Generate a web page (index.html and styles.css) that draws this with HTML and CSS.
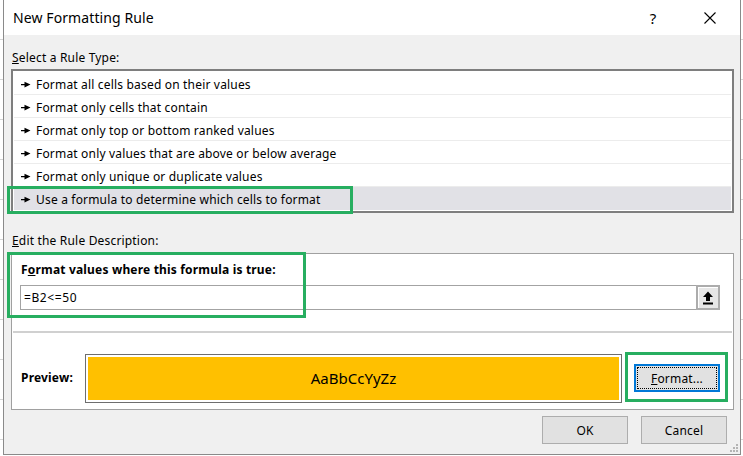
FILE: index.html
```html
<!DOCTYPE html>
<html lang="en">
<head>
<meta charset="utf-8">
<title>New Formatting Rule</title>
<link rel="stylesheet" href="styles.css">
</head>
<body>
<div class="screen">
  <div class="dialog">
    <div class="titlebar">
      <span class="title">New Formatting Rule</span>
      <span class="help">?</span>
      <span class="close"><svg width="12" height="12" viewBox="0 0 12 12"><path d="M0.5 0.5 L11.5 11.5 M11.5 0.5 L0.5 11.5" stroke="#000" stroke-width="1.1" fill="none"/></svg></span>
    </div>
    <div class="body">
      <div class="label label-select"><u>S</u>elect a Rule Type:</div>
      <ul class="rules">
        <li class="rule"><svg class="arrow" width="10" height="7" viewBox="0 0 10 7"><path d="M0 3h4v1.2H0z M3.5 0.8 L9.5 3.6 L3.5 6.4z" fill="#000"/></svg>Format all cells based on their values</li>
        <li class="rule"><svg class="arrow" width="10" height="7" viewBox="0 0 10 7"><path d="M0 3h4v1.2H0z M3.5 0.8 L9.5 3.6 L3.5 6.4z" fill="#000"/></svg>Format only cells that contain</li>
        <li class="rule"><svg class="arrow" width="10" height="7" viewBox="0 0 10 7"><path d="M0 3h4v1.2H0z M3.5 0.8 L9.5 3.6 L3.5 6.4z" fill="#000"/></svg>Format only top or bottom ranked values</li>
        <li class="rule"><svg class="arrow" width="10" height="7" viewBox="0 0 10 7"><path d="M0 3h4v1.2H0z M3.5 0.8 L9.5 3.6 L3.5 6.4z" fill="#000"/></svg>Format only values that are above or below average</li>
        <li class="rule"><svg class="arrow" width="10" height="7" viewBox="0 0 10 7"><path d="M0 3h4v1.2H0z M3.5 0.8 L9.5 3.6 L3.5 6.4z" fill="#000"/></svg>Format only unique or duplicate values</li>
        <li class="rule rule-selected"><svg class="arrow" width="10" height="7" viewBox="0 0 10 7"><path d="M0 3h4v1.2H0z M3.5 0.8 L9.5 3.6 L3.5 6.4z" fill="#000"/></svg>Use a formula to determine which cells to format</li>
      </ul>
      <div class="label label-edit"><u>E</u>dit the Rule Description:</div>
      <div class="desc">
        <div class="desc-top">
          <div class="bold-label">F<u>o</u>rmat values where this formula is true:</div>
          <div class="formula">
            <span class="formula-text">=B2&lt;=50</span>
            <span class="collapse"><svg width="12" height="14" viewBox="0 0 12 14"><path d="M6 0.5 L11 6 L8 6 L8 10 L4 10 L4 6 L1 6z" fill="#000"/><rect x="1" y="11.5" width="10" height="2" fill="#000"/></svg></span>
          </div>
        </div>
        <div class="sep"></div>
        <div class="preview-row">
          <div class="bold-label preview-label">Preview:</div>
          <div class="preview"><div class="preview-fill">AaBbCcYyZz</div></div>
          <div class="btn btn-format"><div class="focus"><u>F</u>ormat...</div></div>
        </div>
      </div>
      <div class="actions">
        <div class="btn">OK</div>
        <div class="btn">Cancel</div>
      </div>
    </div>
    <div class="hl hl-rule"></div>
    <div class="hl hl-formula"></div>
    <div class="hl hl-format"></div>
    <svg class="grip" width="9" height="9" viewBox="0 0 9 9"><g fill="#b4b4b4"><rect x="6" y="0" width="2" height="2"/><rect x="3" y="3" width="2" height="2"/><rect x="6" y="3" width="2" height="2"/><rect x="0" y="6" width="2" height="2"/><rect x="3" y="6" width="2" height="2"/><rect x="6" y="6" width="2" height="2"/></g></svg>
  </div>
</div>
</body>
</html>
```

FILE: styles.css
```css
* { box-sizing: border-box; }
html, body { margin: 0; padding: 0; }
body {
  width: 743px;
  height: 456px;
  overflow: hidden;
  font-family: "Noto Sans", "DejaVu Sans", sans-serif;
  font-size: 12px;
  letter-spacing: 0.18px;
  color: #000;
  background-color: #fff;
  background-image: repeating-linear-gradient(to bottom, transparent 0, transparent 39px, #d6d6d6 39px, #d6d6d6 40px);
}
.screen {
  display: flex;
  padding-left: 3px;
}
.dialog {
  position: relative;
  width: 738px;
  height: 455px;
  border: 1px solid #8a8a8a;
  border-top: none;
  background: #f0f0f0;
  display: flex;
  flex-direction: column;
}
.titlebar {
  height: 35px;
  background: #fff;
  display: flex;
  align-items: center;
  padding-left: 9px;
}
.title {
  font-size: 14px;
  letter-spacing: 0.1px;
  flex: 1;
  line-height: 35px;
}
.help {
  font-size: 15px;
  width: 14px;
  margin-right: 44px;
  text-align: center;
}
.close {
  display: flex;
  width: 12px;
  margin-right: 24px;
}
.body {
  flex: 1;
  display: flex;
  flex-direction: column;
  padding: 0 6px 0 7px;
}
.label {
  line-height: 16px;
  padding-left: 1px;
}
.label-select { margin-top: 15px; margin-bottom: 3px; }
.label-edit { margin-top: 20px; margin-bottom: 4px; }
.rules {
  list-style: none;
  margin: 0;
  padding: 1px;
  border: 2px solid #7e7e7e;
  background: #fff;
  width: 723px;
}
.rule {
  height: 23px;
  display: flex;
  align-items: center;
  padding-left: 7px;
  padding-top: 3px;
  border-bottom: 1px solid #ececec;
}
.rule:last-child { border-bottom: none; padding-top: 2px; }
.rule-selected { background: #e1e1e6; }
.arrow { margin-right: 5px; flex: none; }
.desc {
  width: 723px;
  height: 157px;
  border: 1px solid #a0a0a0;
  background: #fff;
  display: flex;
  flex-direction: column;
}
.desc-top {
  padding: 8px 13px 0 8px;
  height: 77px;
}
.bold-label {
  font-weight: bold;
  line-height: 16px;
  padding-left: 1px;
}
.formula {
  margin-top: 7px;
  height: 25px;
  border: 1px solid #a3a3a3;
  display: flex;
  align-items: center;
}
.formula-text {
  flex: 1;
  padding-left: 3px;
  letter-spacing: 0.6px;
}
.collapse {
  width: 24px;
  height: 25px;
  margin: -1px -1px -1px 0;
  border: 2px solid #acacac;
  background: #e6e6e6;
  box-shadow: inset 1px 1px 0 #fff;
  display: flex;
  align-items: center;
  justify-content: center;
}
.sep {
  height: 2px;
  margin: 0 1px;
  background: #d0d0d0;
}
.preview-row {
  flex: 1;
  display: flex;
  align-items: center;
  padding: 20px 13px 6px 8px;
}
.preview-label { width: 65px; }
.preview {
  width: 537px;
  height: 49px;
  border: 1px solid #6e6e6e;
  padding: 2px;
  background: #fff;
}
.preview-fill {
  height: 100%;
  background: #ffc000;
  display: flex;
  align-items: center;
  justify-content: center;
  font-size: 15px;
  letter-spacing: 0;
}
.btn {
  width: 86px;
  height: 28px;
  border: 1px solid #adadad;
  background: #e1e1e1;
  display: flex;
  align-items: center;
  justify-content: center;
}
.btn-format {
  margin-left: 12px;
  border: 2px solid #0078d7;
  padding: 1px;
}
.focus {
  width: 100%;
  height: 100%;
  border: 1px dotted #000;
  display: flex;
  align-items: center;
  justify-content: center;
}
.actions {
  display: flex;
  justify-content: flex-end;
  gap: 13px;
  margin-top: 6px;
  padding-right: 7px;
}
.hl {
  position: absolute;
  border: 3px solid #27ae60;
}
.hl-rule { left: 3px; top: 186px; width: 346px; height: 28px; }
.hl-formula { left: 3px; top: 252px; width: 299px; height: 66px; }
.hl-format { left: 621px; top: 352px; width: 103px; height: 50px; }
.grip {
  position: absolute;
  right: 1px;
  bottom: 1px;
}
```
